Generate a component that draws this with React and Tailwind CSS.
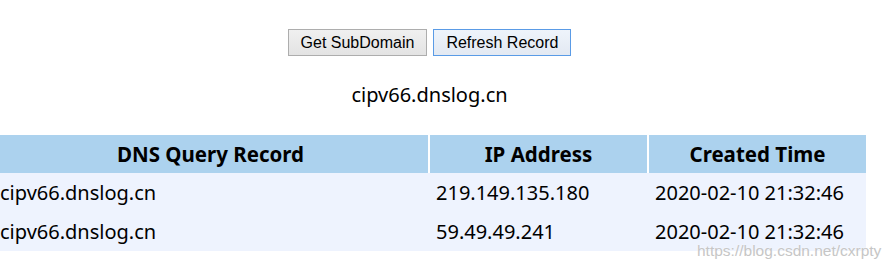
export default function App() {
  const rows = [
    ["cipv66.dnslog.cn", "219.149.135.180", "2020-02-10 21:32:46"],
    ["cipv66.dnslog.cn", "59.49.49.241", "2020-02-10 21:32:46"],
  ];

  return (
    <div className="relative w-[891px] h-[265px] bg-white overflow-hidden">
      <div className="w-[873px] ml-[-7px] pt-[29px]">
        <div className="flex justify-center gap-[6px] font-['Liberation_Sans',Arial,sans-serif] text-[16px] text-black">
          <button className="h-[27px] px-[12px] border border-[#adadad] bg-gradient-to-b from-[#f0f0f0] to-[#e3e3e3]">
            Get SubDomain
          </button>
          <button className="h-[27px] px-[12px] border border-[#5a9be6] bg-gradient-to-b from-[#eef4fb] to-[#e3e9f2]">
            Refresh Record
          </button>
        </div>

        <div className="mt-[26px] text-center font-['Noto_Sans',sans-serif] text-[20px] leading-[26px] text-black">
          cipv66.dnslog.cn
        </div>

        <table className="mt-[27px] w-[873px] border-collapse font-['Noto_Sans',sans-serif] text-black">
          <thead>
            <tr className="bg-[#acd2ee] h-[38px]">
              <th className="w-[436px] border-r-2 border-white text-[20.5px] font-bold">DNS Query Record</th>
              <th className="w-[219px] border-r-2 border-white text-[20.5px] font-bold">IP Address</th>
              <th className="text-[20.5px] font-bold">Created Time</th>
            </tr>
          </thead>
          <tbody>
            {rows.map((r, i) => (
              <tr key={i} className="bg-[#eef3fe] h-[39px]">
                {r.map((c, j) => (
                  <td key={j} className="px-[7px] pt-[1px] text-[20px] leading-[26px] text-left">{c}</td>
                ))}
              </tr>
            ))}
          </tbody>
        </table>
      </div>

      <div className="absolute left-[697px] top-[239px] font-['Liberation_Sans',Arial,sans-serif] text-[15.5px] text-[#c6c6c6] [text-shadow:0_0_2px_#fff]">
        https://blog.csdn.net/cxrpty
      </div>
    </div>
  );
}
